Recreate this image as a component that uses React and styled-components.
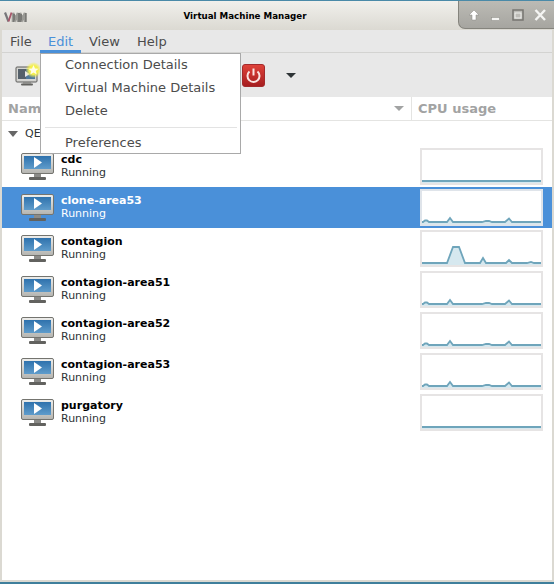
import React from "react";
import styled, { createGlobalStyle } from "styled-components";

const GlobalStyle = createGlobalStyle`
    html, body {
        margin: 0;
        padding: 0;
        background: #3f7f9c;
    }
    * {
        box-sizing: border-box;
    }
`;

const vms = [
    { name: "cdc", graph: "flat" },
    { name: "clone-area53", graph: "low", selected: true },
    { name: "contagion", graph: "spike" },
    { name: "contagion-area51", graph: "low" },
    { name: "contagion-area52", graph: "low" },
    { name: "contagion-area53", graph: "low" },
    { name: "purgatory", graph: "flat" },
];

const graphs = {
    flat: "M0 31 L119 31",
    low: "M0 31 L1 31 L3 29.5 L5 29.5 L7 31 L25 31 L28 27 L31 31 L60 31 L64 30 L67 30 L70 31 L83 31 L87 27.5 L90 31 L119 31",
    spike: "M0 31 L25 31 L31 15 L37 15 L43 31 L58 31 L61 26 L64 31 L84 31 L87 28 L90 31 L105 31 L109 30 L112 31 L119 31",
};

const Window = styled.div`
    position: relative;
    width: 554px;
    height: 584px;
    display: flex;
    flex-direction: column;
    font-family: "DejaVu Sans", sans-serif;
    background: #e8e8e8;
    border-top: 1px solid #4a8aa8;
    border-bottom: 2px solid #3f7f9c;
    overflow: hidden;
`;

const TitleBar = styled.div`
    position: relative;
    height: 29px;
    flex: none;
    display: flex;
    align-items: center;
    justify-content: center;
    padding-right: 64px;
    background: linear-gradient(#f1f0ec, #dbd9d2);
    font-family: "DejaVu Sans", sans-serif;
    font-size: 8.7px;
    font-weight: 700;
    color: #000;
`;

const TitleLogo = styled.div`
    position: absolute;
    left: 4px;
    top: 10px;
    width: 23px;
    height: 12px;
`;

const WindowButtons = styled.div`
    position: absolute;
    right: 0;
    top: 0;
    width: 96px;
    height: 28px;
    display: flex;
    align-items: center;
    gap: 6px;
    padding-left: 7px;
    background: linear-gradient(#bcbbb5, #a6a5a0);
    border-bottom-left-radius: 7px;
    border-left: 1px solid #85847d;
    border-bottom: 1px solid #85847d;
`;

const WindowIcon = styled.svg`
    width: 16px;
    height: 16px;
    flex: none;
`;

const Body = styled.div`
    flex: 1;
    display: flex;
    flex-direction: column;
    border-left: 2px solid #dbd9d2;
    border-right: 2px solid #dbd9d2;
    border-bottom: 2px solid #dbd9d2;
    min-height: 0;
`;

const MenuBar = styled.div`
    height: 23px;
    flex: none;
    display: flex;
    background: #e8e8e8;
    border-bottom: 1px solid #d3d3d1;
`;

const MenuItem = styled.div`
    width: ${(p) => p.$width}px;
    height: 23px;
    padding-left: 8px;
    font-size: 13px;
    line-height: 23px;
    color: ${(p) => (p.$active ? "#4a90d9" : "#4c4c4c")};
    border-bottom: ${(p) => (p.$active ? "3px solid #4a90d9" : "0")};
`;

const Toolbar = styled.div`
    height: 44px;
    flex: none;
    display: flex;
    align-items: center;
    padding-left: 13px;
    background: #e8e8e8;
`;

const ToolIcon = styled.svg`
    width: 26px;
    height: 26px;
    flex: none;
`;

const PowerButton = styled.svg`
    width: 23px;
    height: 23px;
    flex: none;
    margin-left: 201px;
`;

const ToolArrow = styled.div`
    width: 0;
    height: 0;
    margin-left: 21px;
    border-left: 5px solid transparent;
    border-right: 5px solid transparent;
    border-top: 5px solid #2e3436;
`;

const Content = styled.div`
    flex: 1;
    min-height: 0;
    background: #fff;
`;

const HeaderRow = styled.div`
    height: 24px;
    display: flex;
    border-bottom: 1px solid #e4e4e2;
    font-size: 13px;
    font-weight: 700;
    line-height: 23px;
    color: #a2a3a3;
`;

const NameHeader = styled.div`
    flex: 1;
    display: flex;
    align-items: center;
    justify-content: space-between;
    padding: 0 7px 0 6px;
    border-right: 1px solid #e4e4e2;
`;

const HeaderArrow = styled.span`
    width: 0;
    height: 0;
    border-left: 5px solid transparent;
    border-right: 5px solid transparent;
    border-top: 5px solid #a2a3a3;
`;

const CpuHeader = styled.div`
    width: 140px;
    padding-left: 6px;
`;

const GroupRow = styled.div`
    height: 25px;
    display: flex;
    align-items: center;
    gap: 7px;
    padding-left: 6px;
    font-size: 11px;
    color: #2e3436;
`;

const GroupArrow = styled.span`
    width: 0;
    height: 0;
    border-left: 5px solid transparent;
    border-right: 5px solid transparent;
    border-top: 6px solid #666;
`;

const VmRow = styled.div`
    height: 41px;
    display: flex;
    align-items: center;
    padding-left: 19px;
    background: ${(p) => (p.$selected ? "#4a90d9" : "#fff")};
`;

const MonitorIcon = styled.svg`
    width: 33px;
    height: 27px;
    flex: none;
`;

const VmText = styled.div`
    flex: 1;
    margin: -1px 0 0 7px;
    font-size: 11px;
    line-height: 13px;
    color: ${(p) => (p.$selected ? "#fff" : "#2e3436")};
`;

const VmName = styled.div`
    font-weight: 700;
    color: ${(p) => (p.$selected ? "#fff" : "#000")};
`;

const GraphBox = styled.svg`
    width: 123px;
    height: 37px;
    flex: none;
    margin-right: 9px;
    background: #fff;
    border: 2px solid ${(p) => (p.$selected ? "#dfe4ea" : "#e6e4e4")};
`;

const Menu = styled.div`
    position: absolute;
    left: 40px;
    top: 52px;
    width: 201px;
    height: 101px;
    background: #fff;
    border: 1px solid #a9a9a9;
    font-size: 13px;
    color: #4c4c4c;
`;

const MenuEntry = styled.div`
    height: 23px;
    line-height: 22px;
    padding-left: 24px;
`;

const MenuLine = styled.div`
    height: 1px;
    margin: 4px 3px 4px 4px;
    background: #e3e3e3;
`;

const Monitor = () => (
    <MonitorIcon viewBox="0 0 33 27">
        <defs>
            <linearGradient id="bezel" x1="0" y1="0" x2="0" y2="1">
                <stop offset="0" stopColor="#eeeeec" />
                <stop offset="1" stopColor="#b4b4b0" />
            </linearGradient>
            <linearGradient id="screen" x1="0" y1="0" x2="0" y2="1">
                <stop offset="0" stopColor="#2f72ad" />
                <stop offset="1" stopColor="#5f9ccb" />
            </linearGradient>
        </defs>
        <rect x="0.5" y="0.5" width="32" height="20" rx="1.5" fill="url(#bezel)" stroke="#74746f" />
        <rect x="3" y="3" width="27" height="13" fill="url(#screen)" />
        <path d="M13 4 L21 9.5 L13 15 Z" fill="#fff" />
        <rect x="13" y="21" width="7" height="3" fill="#8b8b88" />
        <rect x="8" y="24" width="17" height="3" rx="1" fill="#62625f" />
    </MonitorIcon>
);

const Sparkline = ({ type, selected }) => (
    <GraphBox viewBox="0 0 119 33" $selected={selected}>
        <path d={`${graphs[type]} L119 33 L0 33 Z`} fill="#d6e8ef" />
        <path
            d={graphs[type]}
            fill="none"
            stroke="#6fa5bb"
            strokeWidth={type === "flat" ? 2 : 1.8}
        />
    </GraphBox>
);

export default function App() {
    return (
        <>
            <GlobalStyle />
            <Window>
                <TitleBar>
                    <TitleLogo>
                        <svg width="23" height="12" viewBox="0 0 23 12">
                            <path d="M9 11 L9 2 L11.5 8 L14 2 L14 11 M16 11 L16 2 L18.5 8 L21 2 L21 11" fill="none" stroke="#9a9a95" strokeWidth="2.6" />
                            <path d="M10 11 L10 3 M15 11 L15 2 M17 11 L17 3 M22 11 L22 2" fill="none" stroke="#4a4a48" strokeWidth="0.8" />
                            <path d="M1 1.5 L4.5 10.5" fill="none" stroke="#77777a" strokeWidth="2.2" />
                            <path d="M4.5 10.5 L7.5 1.5" fill="none" stroke="#a8566a" strokeWidth="1.8" />
                        </svg>
                    </TitleLogo>
                    Virtual Machine Manager
                    <WindowButtons>
                        <WindowIcon viewBox="0 0 16 16">
                            <path d="M8 3 L13 8 L10 8 L10 13 L6 13 L6 8 L3 8 Z" fill="#fff" stroke="#8a8984" strokeWidth="0.5" />
                        </WindowIcon>
                        <WindowIcon viewBox="0 0 16 16">
                            <rect x="3.5" y="10.5" width="8" height="3" fill="#f4f4f2" stroke="#8a8984" strokeWidth="0.5" />
                        </WindowIcon>
                        <WindowIcon viewBox="0 0 16 16">
                            <rect x="3" y="3" width="10" height="10" fill="#bdbcb7" stroke="#777671" strokeWidth="1.5" />
                            <rect x="5" y="6" width="6" height="5" fill="none" stroke="#efefed" />
                        </WindowIcon>
                        <WindowIcon viewBox="0 0 16 16">
                            <path d="M3.5 3 L13 13 M13 3 L3.5 13" stroke="#f4f4f2" strokeWidth="2.4" />
                        </WindowIcon>
                    </WindowButtons>
                </TitleBar>
                <Body>
                    <MenuBar>
                        <MenuItem $width={38}>File</MenuItem>
                        <MenuItem $width={41} $active>Edit</MenuItem>
                        <MenuItem $width={48}>View</MenuItem>
                        <MenuItem $width={50}>Help</MenuItem>
                    </MenuBar>
                    <Toolbar>
                        <ToolIcon viewBox="0 0 26 26">
                            <defs>
                                <radialGradient id="glow">
                                    <stop offset="0.55" stopColor="#f5f04e" />
                                    <stop offset="1" stopColor="#f5f04e" stopOpacity="0" />
                                </radialGradient>
                            </defs>
                            <rect x="1" y="5" width="21" height="15" rx="1" fill="#d4d4d1" stroke="#5c5c5a" />
                            <rect x="3" y="7" width="17" height="10" fill="#55606a" />
                            <rect x="11" y="7" width="9" height="10" fill="#50799c" />
                            <path d="M10 9 L15 12 L10 15 Z" fill="#e8e8e8" />
                            <rect x="8" y="20" width="8" height="1.5" fill="#8b8b88" />
                            <rect x="6" y="21.5" width="12" height="2" rx="1" fill="#62625f" />
                            <circle cx="18.5" cy="8" r="8" fill="url(#glow)" />
                            <path d="M18.5 3 L20 6.4 L23.6 6.7 L20.8 9 L21.7 12.5 L18.5 10.6 L15.3 12.5 L16.2 9 L13.4 6.7 L17 6.4 Z" fill="#fffde6" />
                        </ToolIcon>
                        <PowerButton viewBox="0 0 23 23">
                            <defs>
                                <linearGradient id="power" x1="0" y1="0" x2="0" y2="1">
                                    <stop offset="0" stopColor="#e0433a" />
                                    <stop offset="1" stopColor="#a51d1f" />
                                </linearGradient>
                            </defs>
                            <rect x="0.5" y="0.5" width="22" height="22" rx="2.5" fill="url(#power)" stroke="#a32a2c" />
                            <path d="M7.5 7.5 A6 6 0 1 0 15.5 7.5" fill="none" stroke="#fbe5e2" strokeWidth="2" />
                            <path d="M11.5 4.5 L11.5 11.5" stroke="#fbe5e2" strokeWidth="2" />
                        </PowerButton>
                        <ToolArrow />
                    </Toolbar>
                    <Content>
                        <HeaderRow>
                            <NameHeader>
                                Name
                                <HeaderArrow />
                            </NameHeader>
                            <CpuHeader>CPU usage</CpuHeader>
                        </HeaderRow>
                        <GroupRow>
                            <GroupArrow />
                            QEMU/KVM
                        </GroupRow>
                        {vms.map((vm) => (
                            <VmRow key={vm.name} $selected={vm.selected}>
                                <Monitor />
                                <VmText $selected={vm.selected}>
                                    <VmName $selected={vm.selected}>{vm.name}</VmName>
                                    Running
                                </VmText>
                                <Sparkline type={vm.graph} selected={vm.selected} />
                            </VmRow>
                        ))}
                    </Content>
                </Body>
                <Menu>
                    <MenuEntry>Connection Details</MenuEntry>
                    <MenuEntry>Virtual Machine Details</MenuEntry>
                    <MenuEntry>Delete</MenuEntry>
                    <MenuLine />
                    <MenuEntry>Preferences</MenuEntry>
                </Menu>
            </Window>
        </>
    );
}
